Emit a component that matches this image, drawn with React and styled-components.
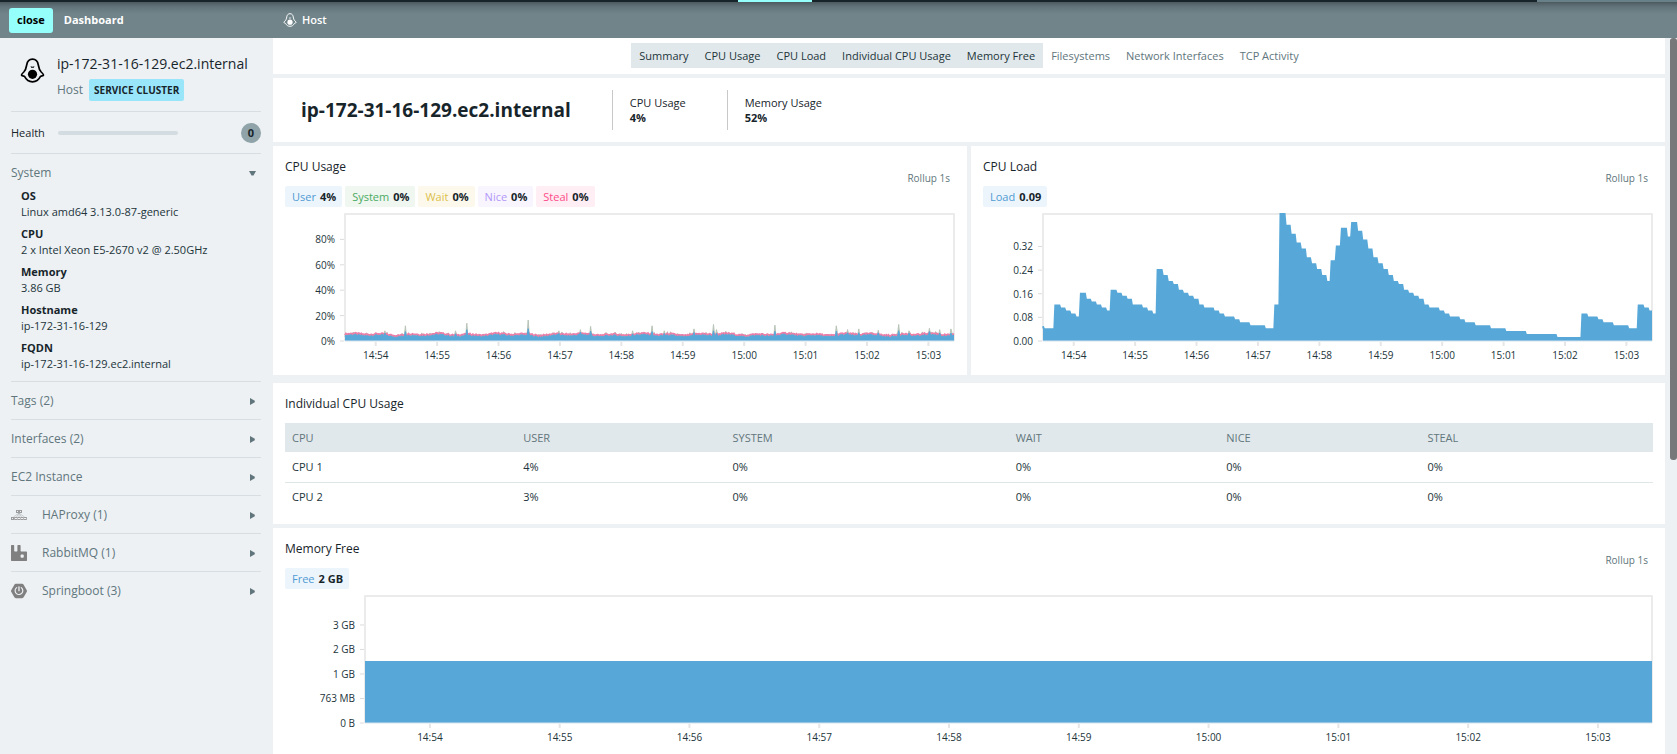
import React, { useLayoutEffect, useRef, useState } from 'react'
import styled, { createGlobalStyle, ThemeProvider } from 'styled-components'
import { SiRabbitmq, SiSpringboot } from 'react-icons/si'

const theme = {
  ink: '#17252b',
  text: '#22343a',
  muted: '#61767c',
  bar: '#70848a',
  page: '#edf1f4',
  panel: '#e1e8eb',
  line: '#d7dde0',
  cyan: '#95fffb',
  blue: '#57a8d8',
}

const GlobalStyle = createGlobalStyle`
  * {
    box-sizing: border-box;
  }
  body {
    margin: 0;
    background: #edf1f4;
    color: #17252b;
    font-family: 'Open Sans', 'Noto Sans', sans-serif;
    font-size: 11px;
    line-height: 16px;
  }
  button {
    border: 0;
    background: none;
    font: inherit;
    color: inherit;
    cursor: pointer;
  }
`

/* ---------- layout ---------- */

const Page = styled.div`
  display: flex;
  flex-direction: column;
  height: 100vh;
  overflow: hidden;
`
const Strip = styled.div`
  display: grid;
  grid-template-columns: 44% 74px 1fr 140px;
  flex: none;
  height: 2px;
  background: ${({ theme }) => theme.ink};
`
const StripMark = styled.span`
  grid-column: ${({ $column }) => $column};
  background: ${({ $color }) => $color};
`
const TopBar = styled.header`
  display: grid;
  grid-template-columns: 283px 1fr;
  align-items: center;
  flex: none;
  height: 36px;
  background: linear-gradient(#4c5a5f, #63757b 5px, ${({ theme }) => theme.bar} 12px);
  color: #fff;
`
const TopGroup = styled.div`
  display: flex;
  align-items: center;
  gap: ${({ $gap }) => $gap}px;
  padding-left: ${({ $inset }) => $inset}px;
`
const CloseButton = styled.button`
  height: 25px;
  padding: 0 8px;
  border-radius: 3px;
  background: ${({ theme }) => theme.cyan};
  color: #000;
  font-weight: 700;
`
const DashboardLink = styled.a`
  color: #fff;
  font-weight: 700;
  text-decoration: none;
`
const Crumb = styled.span`
  font-weight: 600;
`
const Body = styled.div`
  position: relative;
  display: flex;
  flex: 1;
  min-height: 0;
`
const ScrollThumb = styled.span`
  position: absolute;
  top: 0;
  right: 0;
  width: 7px;
  height: 59%;
  border-radius: 3px;
  background: #77787a;
`

/* ---------- sidebar ---------- */

const Sidebar = styled.aside`
  flex: none;
  width: 273px;
  padding: 0 12px 0 11px;
`
const HostHeader = styled.div`
  display: flex;
  gap: 12px;
  padding: 16px 0 10px 9px;
  border-bottom: 1px solid ${({ theme }) => theme.line};

  svg {
    flex: none;
    margin-top: 4px;
    color: #000;
  }
`
const HostName = styled.div`
  margin-bottom: 5px;
  font-size: 14px;
  line-height: 20px;
`
const HostKind = styled.div`
  display: flex;
  align-items: center;
  gap: 6px;
  color: ${({ theme }) => theme.muted};
  font-size: 12px;
`
const Badge = styled.span`
  padding: 0 5px;
  border-radius: 2px;
  background: #99e6fb;
  color: ${({ theme }) => theme.ink};
  font-size: 10px;
  font-weight: 700;
  line-height: 22px;
`
const Health = styled.div`
  display: flex;
  align-items: center;
  height: 42px;
  border-bottom: 1px solid ${({ theme }) => theme.line};
`
const HealthBar = styled.span`
  width: 120px;
  height: 4px;
  margin: 0 auto 0 13px;
  border-radius: 2px;
  background: #d3dce0;
`
const HealthCount = styled.span`
  width: 20px;
  border-radius: 10px;
  background: #8fa3a9;
  font-weight: 700;
  line-height: 20px;
  text-align: center;
`
const Section = styled.section`
  border-bottom: 1px solid ${({ theme }) => theme.line};

  &:last-child {
    border-bottom: 0;
  }
`
const SectionToggle = styled.button`
  display: flex;
  align-items: center;
  width: 100%;
  padding: 10px 5px ${({ $open }) => ($open ? 6 : 9)}px 0;
  color: ${({ theme }) => theme.muted};
  font-size: 12px;
  line-height: 18px;
  text-align: left;
`
const SectionIcon = styled.span`
  display: flex;
  width: 31px;
  color: #808080;
`
const Caret = styled.svg`
  width: 7px;
  height: 7px;
  margin-left: auto;
  fill: ${({ theme }) => theme.muted};
`
const Facts = styled.dl`
  display: flex;
  flex-direction: column;
  gap: 6px;
  margin: 0;
  padding: 0 0 9px 10px;
`
const FactName = styled.dt`
  font-weight: 700;
`
const FactValue = styled.dd`
  margin: 0;
  color: ${({ theme }) => theme.text};
`

/* ---------- content ---------- */

const Content = styled.main`
  display: flex;
  flex: 1;
  flex-direction: column;
  gap: 4px;
  min-width: 0;
  margin-right: 12px;
  overflow-y: auto;
  scrollbar-width: none;
`
const Card = styled.section`
  flex: none;
  min-width: 0;
  padding: 11px 12px 12px;
  background: #fff;
`
const SectionNav = styled.nav`
  display: flex;
  justify-content: center;
  flex: none;
  padding: 5px 0 6px;
  background: #fff;
`
const NavLink = styled.a`
  padding: 0 8px;
  background: ${({ theme, $active }) => ($active ? theme.panel : 'none')};
  color: ${({ theme, $active }) => ($active ? theme.text : theme.muted)};
  line-height: 25px;
  text-decoration: none;
`
const Summary = styled.section`
  display: flex;
  align-items: center;
  flex: none;
  gap: 41px;
  padding: 12px 28px;
  background: #fff;
`
const Title = styled.h1`
  margin: 0;
  font-size: 19px;
  font-weight: 700;
  line-height: 24px;
`
const Stat = styled.div`
  height: 40px;
  padding: 5px 0 5px 17px;
  border-left: 1px solid #c8c8c8;
  line-height: 15px;
`
const StatValue = styled.div`
  font-weight: 700;
`
const ChartRow = styled.div`
  display: grid;
  grid-template-columns: 1fr 1fr;
  flex: none;
  gap: 4px;
  margin-bottom: 4px;
`
const CardHead = styled.div`
  display: flex;
  justify-content: space-between;
  margin-bottom: 3px;
`
const CardTitle = styled.h2`
  margin: 0 0 9px;
  font-size: 12px;
  font-weight: 400;
  line-height: 20px;
`
const Rollup = styled.span`
  padding: 13px 5px 0 0;
  color: ${({ theme }) => theme.muted};
  font-size: 10px;
`
const Pills = styled.div`
  display: flex;
  gap: 3px;
`
const Pill = styled.span`
  padding: 0 6px 0 7px;
  border-radius: 2px;
  background: ${({ $fill }) => $fill};
  color: ${({ $color }) => $color};
  line-height: 21px;

  b {
    margin-left: 4px;
    color: ${({ theme }) => theme.ink};
  }
`
const ChartSvg = styled.svg`
  display: block;
  width: 100%;
  height: 153px;

  text {
    fill: ${({ theme }) => theme.text};
    font-size: 10px;
  }
`
const Table = styled.table`
  width: 100%;
  border-collapse: collapse;
  table-layout: fixed;
`
const Th = styled.th`
  width: ${({ $width }) => $width};
  height: 29px;
  padding: 0 7px;
  background: ${({ theme }) => theme.panel};
  color: ${({ theme }) => theme.muted};
  font-weight: 400;
  text-align: left;
  text-transform: uppercase;
`
const Td = styled.td`
  height: 30px;
  padding: 0 7px;
  color: ${({ theme }) => theme.text};

  tr:not(:last-child) > & {
    border-bottom: 1px solid #dfe6e8;
  }
`

/* ---------- icons ---------- */

const HostIcon = ({ size }) => (
  <svg width={size} height={size} viewBox="0 0 24 25" fill="none" aria-hidden="true">
    <path
      d="M12 1.2c-3.6 0-5.3 2.6-5.8 5.8-.5 3-.9 4.900-2.900 7-1.400 1.400-2.400 2.400-2.300 3 .2 1 2.600.6 3.200 1.700 1.700 3.500 4.400 5.100 7.800 5.100s6.100-1.600 7.800-5.100c.6-1.100 3-.7 3.200-1.700.1-.6-.9-1.600-2.300-3-2-2.100-2.400-4-2.900-7-.5-3.200-2.200-5.800-5.800-5.800z"
      stroke="currentColor"
      strokeWidth="1.7"
      strokeLinejoin="round"
    />
    <circle cx="12" cy="16.300" r="4.600" fill="currentColor" />
    <path d="M10 8.200l2 .5 2-.5-.7 1.600h-2.600z" fill="currentColor" />
  </svg>
)

const HaproxyIcon = () => (
  <svg width="16" height="16" viewBox="0 0 16 16" fill="none" stroke="currentColor" opacity=".75" aria-hidden="true">
    <path d="M8 6L2.500 10M8 6L5.500 10M8 6v4M8 6l2.500 4M8 6l5.500 4" strokeWidth=".6" opacity=".7" />
    <rect x="5.500" y="3.500" width="2" height="2" />
    <rect x="8.500" y="3.500" width="2" height="2" />
    {[0.5, 3.7, 6.9, 10.1, 13.3].map(x => (
      <rect key={x} x={x} y="10.500" width="2" height="2" />
    ))}
  </svg>
)

/* ---------- charts ---------- */

const SPAN = 595 // seconds shown
const FIRST_TICK = 30
const TIMES = ['14:54', '14:55', '14:56', '14:57', '14:58', '14:59', '15:00', '15:01', '15:02', '15:03']
const TOP = 4
const BOTTOM = 131

// load average in hundredths, a new value every five seconds
const LOAD = [
  12, 11, 10, 9, 8, 16, 14, 13, 12, 11, 10, 17, 16, 15, 14, 12, 12, 11, 10, 9,
  24, 22, 20, 19, 17, 16, 15, 14, 12, 11, 11, 10, 9, 8, 8, 7, 6, 6, 5, 5, 5, 4, 4,
  12, 43, 39, 36, 33, 31, 28, 26, 24, 22, 20, 27, 32, 38, 35, 40, 37, 34, 31, 28,
  26, 24, 22, 20, 19, 17, 16, 15, 14, 12, 11, 11, 10, 9, 8, 8, 7, 6, 6, 5, 5, 5,
  4, 4, 4, 3, 3, 3, 3, 2, 2, 2, 2, 2, 2, 1, 1, 1, 1, 1, 9, 8, 8, 7, 6, 6, 5, 5, 5,
  4, 4, 12, 11, 10,
]

const seconds = Array.from({ length: SPAN + 1 }, (_, i) => i)

const loadPoints = seconds.map(s => {
  if (s === 0) return 0.05
  if (s < 12) return 0.04
  return LOAD[Math.min(LOAD.length - 1, Math.floor((s - 12) / 5))] / 100
})

const SPIKES = {
  39: 8, 59: 12, 108: 8, 119: 14, 179: 16.5, 209: 8, 230: 9, 240: 11.5, 281: 8, 300: 12,
  312: 8, 341: 9.5, 360: 13, 363: 9, 420: 12.5, 480: 12, 491: 9, 502: 9.5, 521: 8.5,
  541: 13, 551: 8, 571: 10, 581: 9, 592: 9.5,
}

const noise = n => {
  const v = Math.sin(n * 12.9898) * 43758.5453
  return v - Math.floor(v)
}

const basePoints = seconds.map(
  s => 4.1 + Math.sin(s / 4.5) * 0.5 + Math.sin(s / 11) * 0.4 + (noise(s) - 0.5) * 1.2
)
const userPoints = basePoints.map((v, s) => (SPIKES[s] ? v + (SPIKES[s] - v) * 0.45 : v))
const systemPoints = basePoints.map((v, s) => SPIKES[s] || v + (noise(s + 900) > 0.93 ? 2.4 : 0.6))
const stealPoints = basePoints.map(v => v + 1)

const useWidth = () => {
  const ref = useRef(null)
  const [width, setWidth] = useState(0)

  useLayoutEffect(() => {
    const measure = () => setWidth(ref.current.getBoundingClientRect().width)
    measure()
    const observer = new ResizeObserver(measure)
    observer.observe(ref.current)
    return () => observer.disconnect()
  }, [])

  return [ref, width]
}

const Chart = ({ label, left, max, ticks, series }) => {
  const [ref, width] = useWidth()
  const right = Math.max(left, width - 1)
  const x = s => left + (s / SPAN) * (right - left)
  const y = v => BOTTOM - (Math.min(v, max) / max) * (BOTTOM - TOP)
  const line = points => points.map((v, s) => `${x(s).toFixed(1)},${y(v).toFixed(1)}`).join('L')

  return (
    <ChartSvg ref={ref} role="img" aria-label={label}>
      {width > 0 && (
        <>
          <path
            d={`M${left} ${BOTTOM}V${TOP}H${right}V${BOTTOM}`}
            fill="none"
            stroke="#ebebeb"
            strokeWidth="2"
            strokeLinejoin="round"
          />
          {series.map(({ key, points, fill, stroke, strokeWidth }) => (
            <g key={key}>
              {fill && <path d={`M${left},${BOTTOM}L${line(points)}V${BOTTOM}Z`} fill={fill} />}
              <path d={`M${line(points)}`} fill="none" stroke={stroke} strokeWidth={strokeWidth} />
            </g>
          ))}
          <path d={`M${left} ${BOTTOM}H${right}`} stroke="#d5e3ec" />
          {ticks.map(([value, text]) => (
            <g key={text}>
              <path d={`M${left - 5} ${y(value)}H${left - 1}`} stroke="#dcdcdc" />
              <text x={left - 10} y={y(value) + 4} textAnchor="end">
                {text}
              </text>
            </g>
          ))}
          {TIMES.map((time, i) => (
            <g key={time}>
              <path
                d={`M${x(FIRST_TICK + i * 60)} ${BOTTOM + 1}v4`}
                stroke="#e6e6e6"
                strokeWidth="2"
              />
              <text x={x(FIRST_TICK + i * 60)} y={BOTTOM + 18} textAnchor="middle">
                {time}
              </text>
            </g>
          ))}
        </>
      )}
    </ChartSvg>
  )
}

const ChartCard = ({ id, title, pills, children }) => (
  <Card id={id}>
    <CardHead>
      <div>
        <CardTitle>{title}</CardTitle>
        <Pills>
          {pills.map(([name, value, color, fill]) => (
            <Pill key={name} $color={color} $fill={fill}>
              {name}
              <b>{value}</b>
            </Pill>
          ))}
        </Pills>
      </div>
      <Rollup>Rollup 1s</Rollup>
    </CardHead>
    {children}
  </Card>
)

/* ---------- data ---------- */

const NAV = [
  ['Summary', true],
  ['CPU Usage', true],
  ['CPU Load', true],
  ['Individual CPU Usage', true],
  ['Memory Free', true],
  ['Filesystems', false],
  ['Network Interfaces', false],
  ['TCP Activity', false],
]

const FACTS = [
  ['OS', 'Linux amd64 3.13.0-87-generic'],
  ['CPU', '2 x Intel Xeon E5-2670 v2 @ 2.50GHz'],
  ['Memory', '3.86 GB'],
  ['Hostname', 'ip-172-31-16-129'],
  ['FQDN', 'ip-172-31-16-129.ec2.internal'],
]

const SECTIONS = [
  { name: 'Tags (2)' },
  { name: 'Interfaces (2)' },
  { name: 'EC2 Instance' },
  { name: 'HAProxy (1)', icon: <HaproxyIcon /> },
  { name: 'RabbitMQ (1)', icon: <SiRabbitmq size={16} /> },
  { name: 'Springboot (3)', icon: <SiSpringboot size={16} /> },
]

const CPU_PILLS = [
  ['User', '4%', '#4f9bd3', '#edf5fc'],
  ['System', '0%', '#4bab62', '#eff7f0'],
  ['Wait', '0%', '#dcbf4b', '#fcf9ec'],
  ['Nice', '0%', '#b295f7', '#f8f5ff'],
  ['Steal', '0%', '#ff4b89', '#ffeef3'],
]

const COLUMNS = [
  ['CPU', '16.9%'],
  ['User', '15.3%'],
  ['System', '20.7%'],
  ['Wait', '15.4%'],
  ['Nice', '14.7%'],
  ['Steal', '17%'],
]

const ROWS = [
  ['CPU 1', '4%', '0%', '0%', '0%', '0%'],
  ['CPU 2', '3%', '0%', '0%', '0%', '0%'],
]

const toId = name => name.toLowerCase().replace(/ /g, '-')

const SidebarSection = ({ name, icon, initiallyOpen = false, children }) => {
  const [open, setOpen] = useState(initiallyOpen)

  return (
    <Section>
      <SectionToggle $open={open} aria-expanded={open} onClick={() => setOpen(!open)}>
        {icon && <SectionIcon>{icon}</SectionIcon>}
        {name}
        <Caret viewBox="0 0 7 7" aria-hidden="true">
          <path d={open ? 'M0 1h7L4.500 5.500h-2z' : 'M1 0L5.800 2.700v1.600L1 7z'} />
        </Caret>
      </SectionToggle>
      {open && children}
    </Section>
  )
}

const App = () => {
  const { blue } = theme

  return (
    <ThemeProvider theme={theme}>
      <GlobalStyle />
      <Page>
        <Strip>
          <StripMark $column={2} $color={theme.cyan} />
          <StripMark $column={4} $color="#688087" />
        </Strip>
        <TopBar>
          <TopGroup $gap={11} $inset={9}>
            <CloseButton>close</CloseButton>
            <DashboardLink href="#dashboard">Dashboard</DashboardLink>
          </TopGroup>
          <TopGroup $gap={5} $inset={0}>
            <HostIcon size={14} />
            <Crumb>Host</Crumb>
          </TopGroup>
        </TopBar>
        <Body>
          <Sidebar>
            <HostHeader>
              <HostIcon size={25} />
              <div>
                <HostName>ip-172-31-16-129.ec2.internal</HostName>
                <HostKind>
                  Host <Badge>SERVICE CLUSTER</Badge>
                </HostKind>
              </div>
            </HostHeader>
            <Health>
              Health
              <HealthBar />
              <HealthCount>0</HealthCount>
            </Health>
            <SidebarSection name="System" initiallyOpen>
              <Facts>
                {FACTS.map(([name, value]) => (
                  <div key={name}>
                    <FactName>{name}</FactName>
                    <FactValue>{value}</FactValue>
                  </div>
                ))}
              </Facts>
            </SidebarSection>
            {SECTIONS.map(section => (
              <SidebarSection key={section.name} {...section} />
            ))}
          </Sidebar>
          <Content>
            <SectionNav>
              {NAV.map(([name, active]) => (
                <NavLink key={name} href={`#${toId(name)}`} $active={active}>
                  {name}
                </NavLink>
              ))}
            </SectionNav>
            <Summary id="summary">
              <Title>ip-172-31-16-129.ec2.internal</Title>
              <Stat>
                CPU Usage
                <StatValue>4%</StatValue>
              </Stat>
              <Stat>
                Memory Usage
                <StatValue>52%</StatValue>
              </Stat>
            </Summary>
            <ChartRow>
              <ChartCard id="cpu-usage" title="CPU Usage" pills={CPU_PILLS}>
                <Chart
                  label="CPU usage"
                  left={60}
                  max={100}
                  ticks={[[0, '0%'], [20, '20%'], [40, '40%'], [60, '60%'], [80, '80%']]}
                  series={[
                    { key: 'system', points: systemPoints, fill: '#a9cdb8', stroke: '#b9c4b9', strokeWidth: 1 },
                    { key: 'steal', points: stealPoints, stroke: '#ea7fa8', strokeWidth: 2 },
                    { key: 'user', points: userPoints, fill: blue, stroke: blue, strokeWidth: 1 },
                  ]}
                />
              </ChartCard>
              <ChartCard id="cpu-load" title="CPU Load" pills={[['Load', '0.09', '#4f9bd3', '#edf5fc']]}>
                <Chart
                  label="CPU load"
                  left={60}
                  max={0.43}
                  ticks={[[0, '0.00'], [0.08, '0.08'], [0.16, '0.16'], [0.24, '0.24'], [0.32, '0.32']]}
                  series={[{ key: 'load', points: loadPoints, fill: blue, stroke: blue, strokeWidth: 2 }]}
                />
              </ChartCard>
            </ChartRow>
            <Card id="individual-cpu-usage">
              <CardTitle>Individual CPU Usage</CardTitle>
              <Table>
                <thead>
                  <tr>
                    {COLUMNS.map(([name, width]) => (
                      <Th key={name} scope="col" $width={width}>
                        {name}
                      </Th>
                    ))}
                  </tr>
                </thead>
                <tbody>
                  {ROWS.map(row => (
                    <tr key={row[0]}>
                      {row.map((cell, i) => (
                        <Td key={COLUMNS[i][0]}>{cell}</Td>
                      ))}
                    </tr>
                  ))}
                </tbody>
              </Table>
            </Card>
            <ChartCard id="memory-free" title="Memory Free" pills={[['Free', '2 GB', '#4f9bd3', '#edf5fc']]}>
              <Chart
                label="Memory free"
                left={80}
                max={3.86}
                ticks={[[0, '0 B'], [0.745, '763 MB'], [1.49, '1 GB'], [2.235, '2 GB'], [2.98, '3 GB']]}
                series={[
                  { key: 'free', points: seconds.map(() => 1.85), fill: blue, stroke: blue, strokeWidth: 2 },
                ]}
              />
            </ChartCard>
          </Content>
          <ScrollThumb />
        </Body>
      </Page>
    </ThemeProvider>
  )
}

export default App
